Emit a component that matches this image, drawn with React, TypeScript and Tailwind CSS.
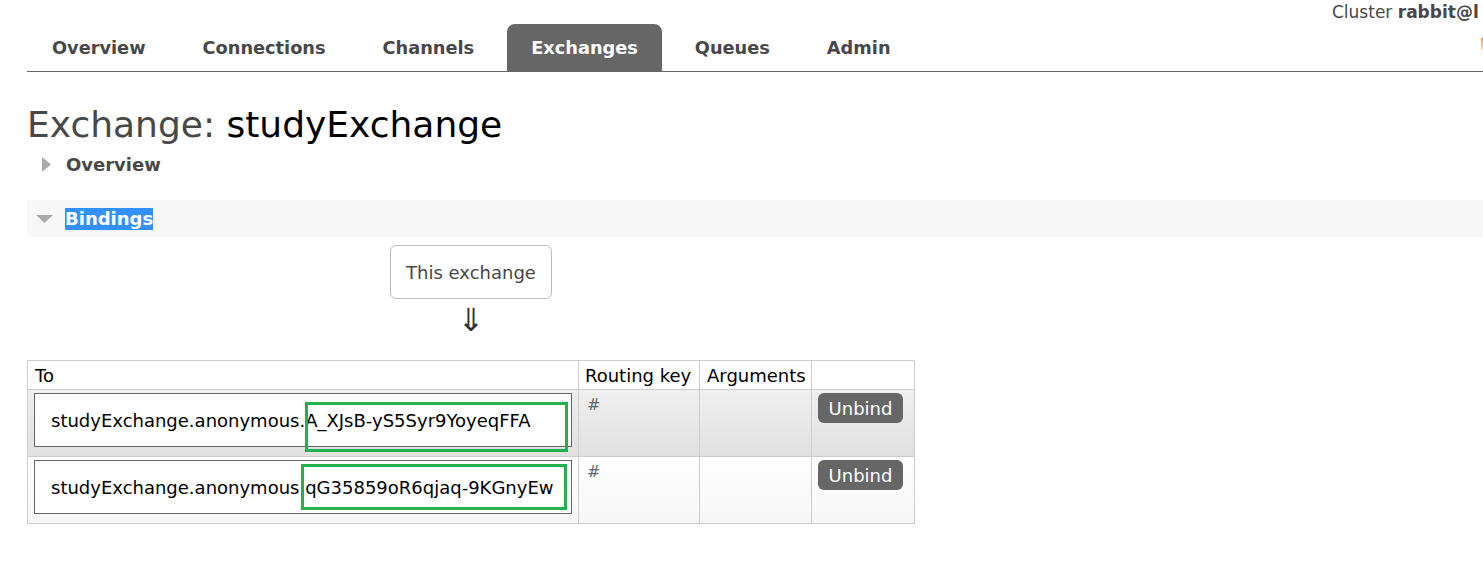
import React from 'react';

const tabs = ['Overview', 'Connections', 'Channels', 'Exchanges', 'Queues', 'Admin'];

const bindings = [
  {
    queue: 'studyExchange.anonymous.A_XJsB-yS5Syr9YoyeqFFA',
    row: 'bg-gradient-to-b from-[#efefef] to-[#e0e0e0]',
    mark: 'left-[270px] top-[8px] w-[263px] h-[50px]',
  },
  {
    queue: 'studyExchange.anonymous.qG35859oR6qjaq-9KGnyEw',
    row: 'bg-gradient-to-b from-white to-[#f6f6f6]',
    mark: 'left-[266px] top-[3px] w-[266px] h-[46px]',
  },
];

const App: React.FC = () => {
  return (
    <div className="w-full h-[575px] overflow-hidden bg-white font-['DejaVu_Sans',sans-serif] text-[#484848]">
      <header className="relative pl-[27px]">
        <div className="absolute left-[1332px] top-0 whitespace-nowrap text-[17px] text-[#484848]">
          Cluster <b>rabbit@l</b>
        </div>
        <span className="absolute right-0 top-[38px] w-[2px] h-[12px] bg-gradient-to-b from-[#f0a030] to-[#fbe0b0]" />
        <nav className="flex items-end h-[72px] border-b border-[#666]">
          <ul className="flex items-end gap-[9px] pl-px">
            {tabs.map((t) => (
              <li
                key={t}
                className={
                  'h-[47px] px-6 pt-[2px] flex items-center rounded-t-lg text-[17.75px] font-bold ' +
                  (t === 'Exchanges' ? 'bg-[#666] text-white' : 'text-[#484848]')
                }
              >
                {t}
              </li>
            ))}
          </ul>
        </nav>
      </header>

      <main className="pl-[27px]">
        <h1 className="mt-[31px] text-[36px] leading-[43px] text-[#484848]">
          Exchange: <span className="text-black">studyExchange</span>
        </h1>

        <div className="flex items-center h-[26px] mt-[5px] pl-[15px] gap-[15px]">
          <svg width="9" height="15" viewBox="0 0 9 15" className="shrink-0">
            <path d="M0 0 L9 7.5 L0 15 Z" fill="#aaa" />
          </svg>
          <span className="text-[18px] font-bold">Overview</span>
        </div>

        <div className="flex items-center h-[37px] mt-[23px] bg-[#f7f7f7] pl-[9px] gap-[12px]">
          <svg width="17" height="8" viewBox="0 0 17 8" className="shrink-0">
            <path d="M0 0 L17 0 L8.5 8 Z" fill="#aaa" />
          </svg>
          <span className="text-[18px] font-bold bg-[#3390ff] text-white leading-[22px]">Bindings</span>
        </div>

        <div className="flex flex-col items-center w-[162px] ml-[363px] mt-[8px]">
          <div className="w-[162px] h-[54px] border border-[#bbb] rounded-md flex items-center justify-center text-[18px] text-[#484848]">
            This exchange
          </div>
          <div className="text-[32px] leading-[34px] text-[#333] mt-[4px]">⇓</div>
        </div>

        <table className="mt-[23px] w-[887px] table-fixed border-collapse text-[18px] text-black whitespace-nowrap">
          <colgroup>
            <col className="w-[551px]" />
            <col className="w-[121px]" />
            <col className="w-[112px]" />
            <col className="w-[103px]" />
          </colgroup>
          <thead>
            <tr className="h-[29px]">
              <th className="border border-[#ccc] px-[7px] text-left font-normal">To</th>
              <th className="border border-[#ccc] px-[6px] text-left font-normal">Routing key</th>
              <th className="border border-[#ccc] px-[7px] text-left font-normal">Arguments</th>
              <th className="border border-[#ccc]" />
            </tr>
          </thead>
          <tbody>
            {bindings.map((b) => (
              <tr key={b.queue} className={'h-[67px] ' + b.row}>
                <td className="border border-[#ccc] align-top pt-[3px] pb-[8px] px-[6px]">
                  <div className="relative h-[54px] border border-[#666] bg-white flex items-center pl-[16px]">
                    {b.queue}
                    <span className={'absolute border-[3px] border-[#22b14c] ' + b.mark} />
                  </div>
                </td>
                <td className="border border-[#ccc] align-top px-[8px] pt-[3px] text-[16px] text-[#666]">#</td>
                <td className="border border-[#ccc]" />
                <td className="border border-[#ccc] align-top px-[6px] pt-[3px]">
                  <button className="w-[85px] h-[30px] rounded-md bg-[#666] text-white text-[18px]">Unbind</button>
                </td>
              </tr>
            ))}
          </tbody>
        </table>
      </main>
    </div>
  );
};

export default App;
